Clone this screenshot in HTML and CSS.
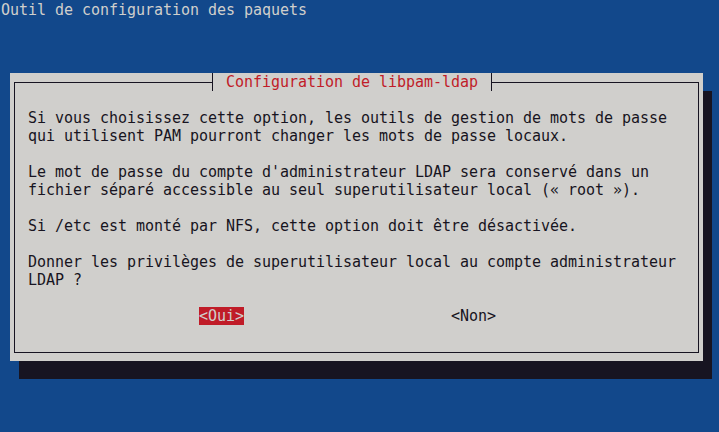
FILE: index.html
```html
<!DOCTYPE html>
<html lang="fr">
<head>
<meta charset="utf-8">
<title>Outil de configuration des paquets</title>
<link rel="stylesheet" href="styles.css">
</head>
<body>
  <div class="backtitle">Outil de configuration des paquets</div>
  <div class="dialog">
    <div class="frame">
      <div class="para">Si vous choisissez cette option, les outils de gestion de mots de passe
qui utilisent PAM pourront changer les mots de passe locaux.</div>
      <div class="para">Le mot de passe du compte d'administrateur LDAP sera conservé dans un
fichier séparé accessible au seul superutilisateur local (« root »).</div>
      <div class="para">Si /etc est monté par NFS, cette option doit être désactivée.</div>
      <div class="para">Donner les privilèges de superutilisateur local au compte administrateur
LDAP ?</div>
      <div class="buttons">
        <span class="btn btn-active">&lt;Oui&gt;</span>
        <span class="btn">&lt;Non&gt;</span>
      </div>
    </div>
    <div class="title">Configuration de libpam-ldap</div>
  </div>
</body>
</html>
```
FILE: styles.css
```css
html {
  margin: 0;
  background: #12488B;
  height: 100%;
}
body {
  margin: 0;
  padding: 1px;
  box-sizing: border-box;
  min-height: 100%;
  background: #12488B;
  font-family: "DejaVu Sans Mono", monospace;
  font-size: 15px;
  line-height: 18px;
  letter-spacing: -0.03px;
}
.backtitle {
  color: #D0CFCC;
  height: 18px;
  white-space: pre;
}
.dialog {
  position: relative;
  margin: 54px 0 0 9px;
  width: 693px;
  height: 288px;
  box-sizing: border-box;
  padding: 9px 4px 8px 4px;
  background: #D0CFCC;
  box-shadow: 9px 18px 0 0 #171421;
  color: #171421;
}
.frame {
  border: 1px solid #171421;
  height: 100%;
  box-sizing: border-box;
  padding: 26px 0 0 13px;
  display: flex;
  flex-direction: column;
  gap: 18px;
}
.para {
  white-space: pre;
}
.buttons {
  display: flex;
  gap: 207px;
  padding-left: 171px;
}
.btn {
  white-space: pre;
}
.btn-active {
  background: #C01C28;
  color: #D0CFCC;
}
.title {
  position: absolute;
  top: 0;
  left: 202px;
  height: 18px;
  width: 280px;
  box-sizing: border-box;
  border-left: 1px solid #171421;
  border-right: 1px solid #171421;
  padding: 0 13px;
  background: #D0CFCC;
  color: #C01C28;
  white-space: pre;
}
```
